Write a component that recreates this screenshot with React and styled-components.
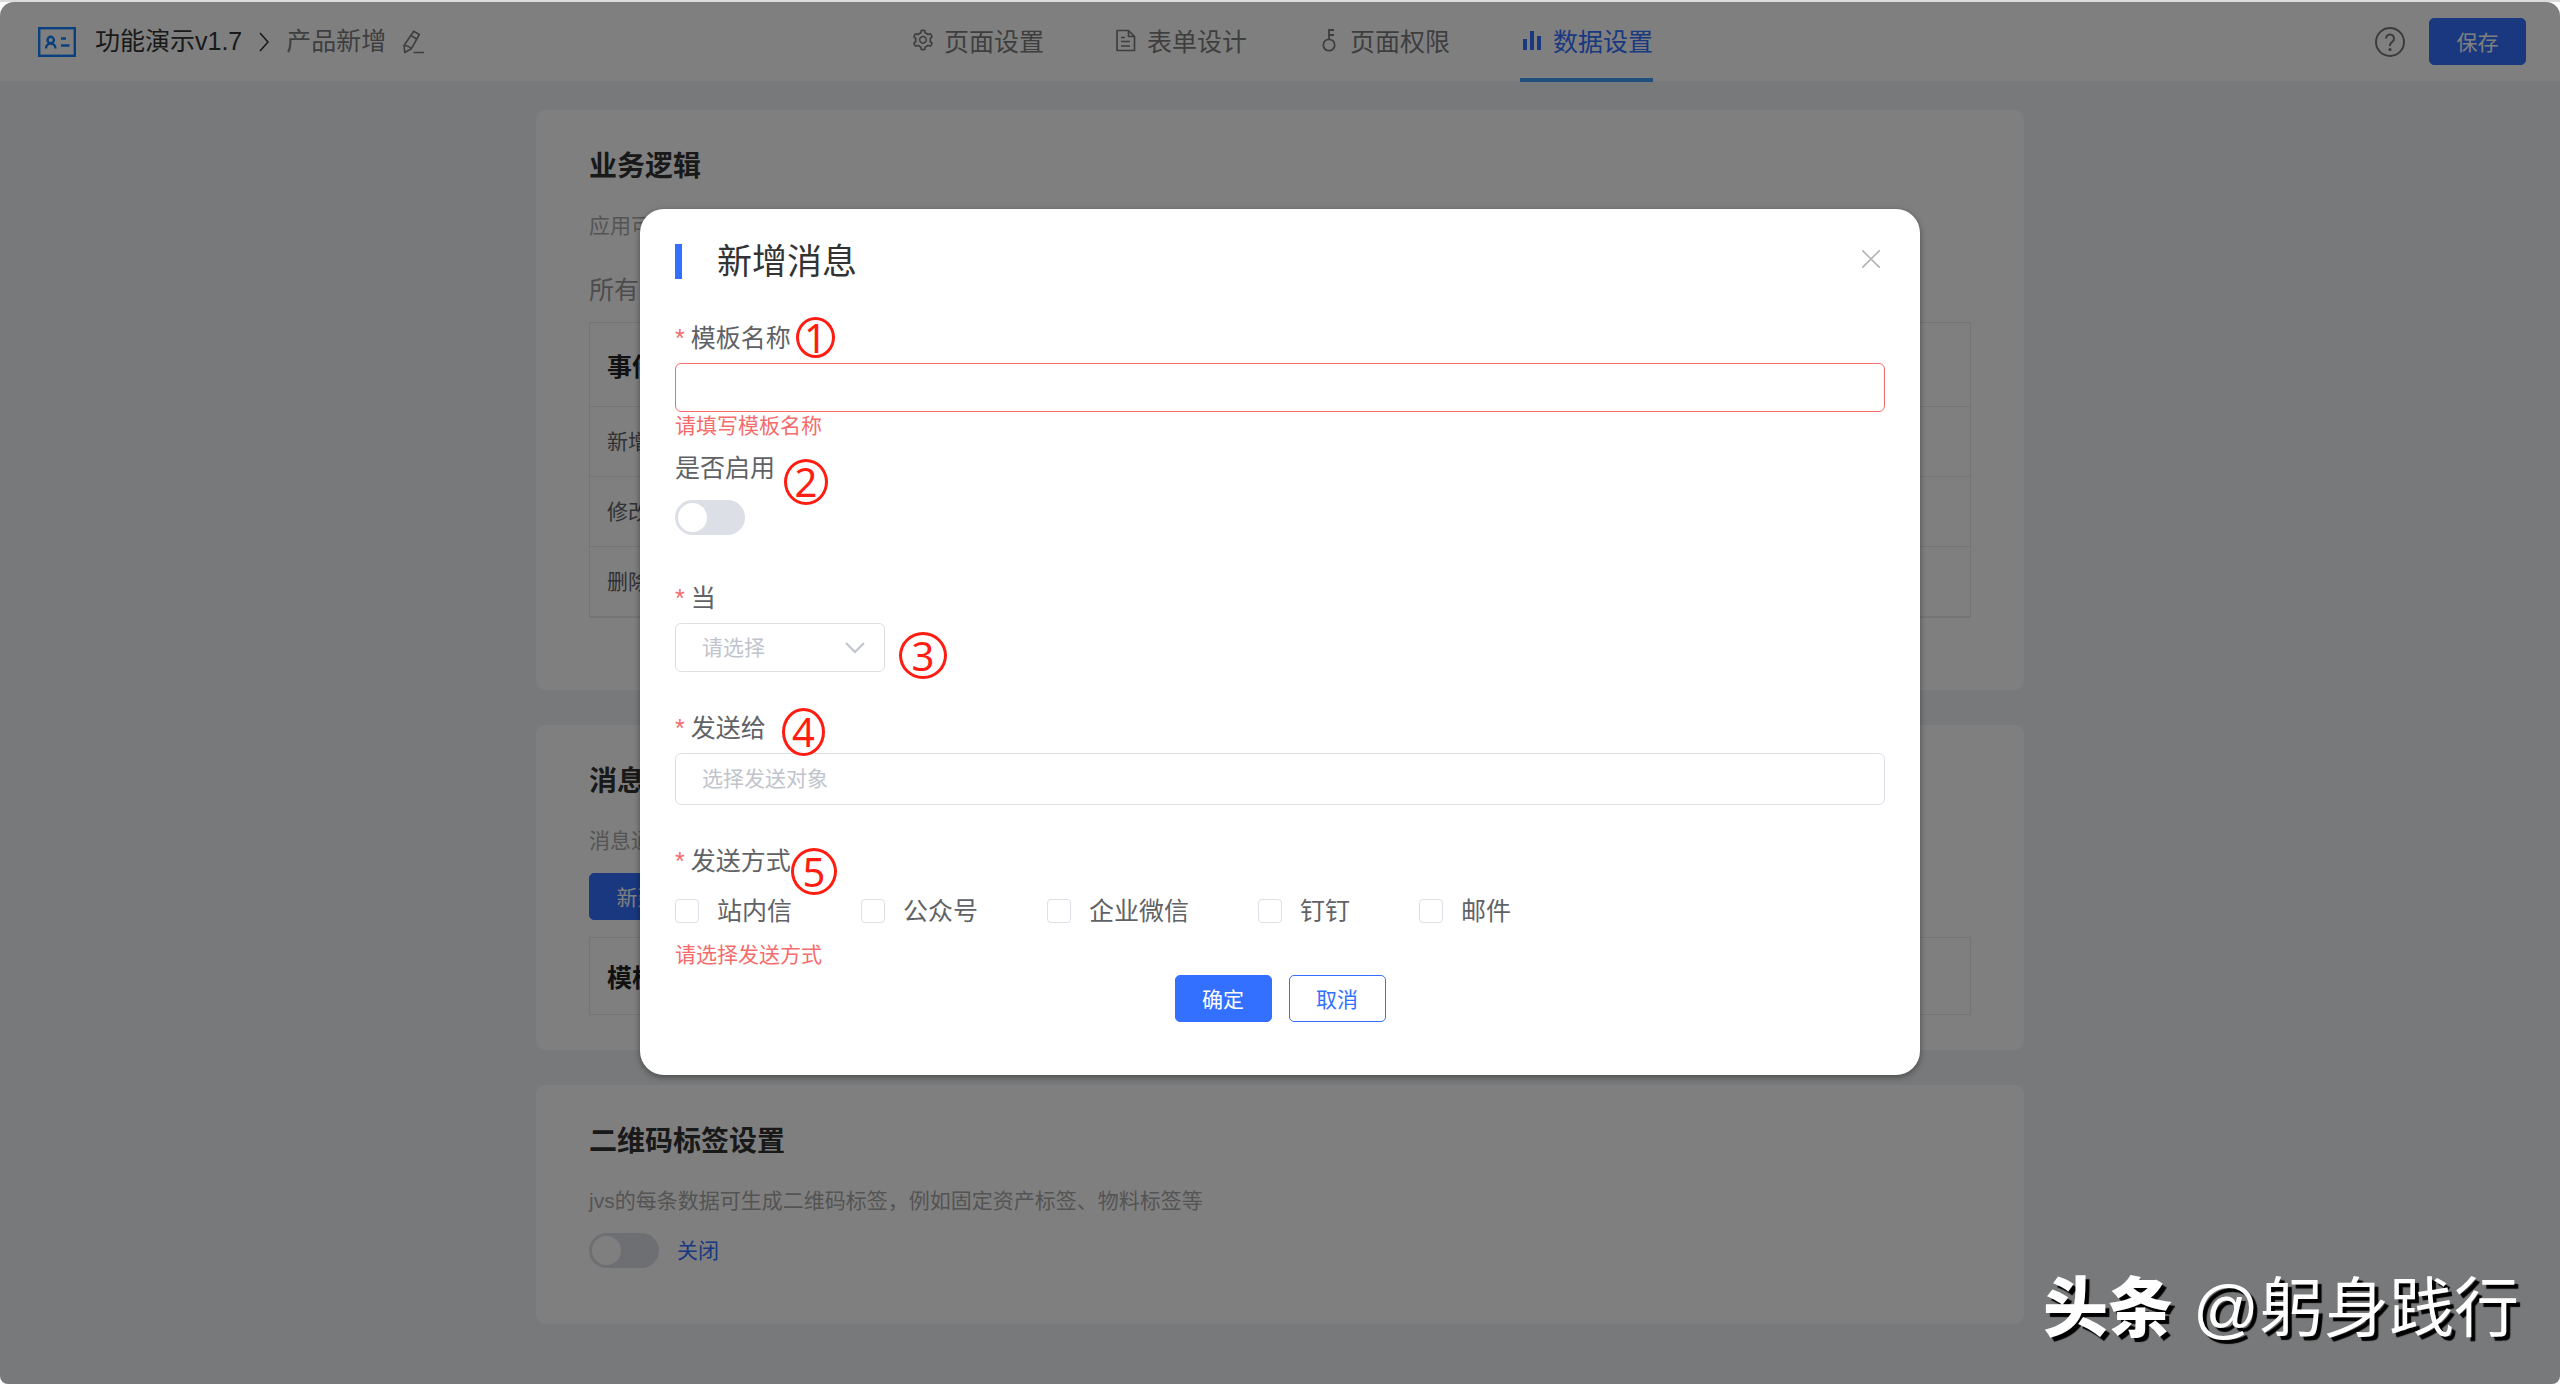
import React, { useState } from "react"
import styled, { createGlobalStyle } from "styled-components"
import { AiOutlineSetting } from "react-icons/ai"

const tabs = [
  { id: "page", text: "页面设置", icon: <AiOutlineSetting size={26} /> },
  { id: "form", text: "表单设计", icon: <FormIcon /> },
  { id: "auth", text: "页面权限", icon: <KeyIcon /> },
  { id: "data", text: "数据设置", icon: <ChartIcon /> },
]
const events = ["新增", "修改", "删除"]
const channels = ["站内信", "公众号", "企业微信", "钉钉", "邮件"]

export default function App() {
  const [tab, setTab] = useState("data")
  return (
    <Page>
      <GlobalStyle />
      <Frame>
        <Header>
          <Crumbs>
            <LogoIcon />
            <AppName>功能演示v1.7</AppName>
            <svg width="10" height="20" viewBox="0 0 10 20" fill="none" stroke="#333" strokeWidth="1.6">
              <path d="M1 1l8 9-8 9" />
            </svg>
            <PageName>产品新增</PageName>
            <IconButton aria-label="编辑名称">
              <PencilIcon />
            </IconButton>
          </Crumbs>
          <Tabs>
            {tabs.map(item => (
              <Tab key={item.id} $active={item.id === tab} onClick={() => setTab(item.id)}>
                {item.icon}
                {item.text}
              </Tab>
            ))}
          </Tabs>
          <Actions>
            <IconButton aria-label="帮助">
              <HelpIcon />
            </IconButton>
            <Button $primary>保存</Button>
          </Actions>
        </Header>
        <Main>
          <Card $bottom={72}>
            <CardTitle>业务逻辑</CardTitle>
            <Description>应用可配置业务逻辑</Description>
            <Summary>所有的事件</Summary>
            <Table>
              <thead>
                <tr>
                  <th>事件</th>
                </tr>
              </thead>
              <tbody>
                {events.map(name => (
                  <tr key={name}>
                    <td>{name}</td>
                  </tr>
                ))}
              </tbody>
            </Table>
          </Card>
          <Card $bottom={35}>
            <CardTitle>消息通知</CardTitle>
            <Description>消息通知设置</Description>
            <CardRow>
              <Button $primary>新建</Button>
            </CardRow>
            <Table $compact>
              <thead>
                <tr>
                  <th>模板名称</th>
                </tr>
              </thead>
            </Table>
          </Card>
          <Card $bottom={56}>
            <CardTitle>二维码标签设置</CardTitle>
            <Description>jvs的每条数据可生成二维码标签，例如固定资产标签、物料标签等</Description>
            <CardRow>
              <Switch type="checkbox" role="switch" id="qrcode" />
              <SwitchText htmlFor="qrcode">关闭</SwitchText>
            </CardRow>
          </Card>
        </Main>
        <Overlay>
          <MessageDialog />
        </Overlay>
        <Watermark>
          <b>头条</b>
          <span>@躬身践行</span>
        </Watermark>
      </Frame>
    </Page>
  )
}

function MessageDialog() {
  return (
    <Dialog role="dialog" aria-labelledby="dialog-title">
      <DialogHeader>
        <DialogTitle id="dialog-title">新增消息</DialogTitle>
        <IconButton aria-label="关闭">
          <svg width="18" height="18" viewBox="0 0 18 18" stroke="#b4b4b4" strokeWidth="1.6">
            <path d="M0 0l18 18M18 0L0 18" />
          </svg>
        </IconButton>
      </DialogHeader>
      <Item>
        <Label htmlFor="name" $required>
          模板名称
        </Label>
        <Input id="name" $error />
        <Message>请填写模板名称</Message>
        <Mark $x={121} $y={-4} $w={39} $h={41}>1</Mark>
      </Item>
      <Item>
        <Label htmlFor="enabled">是否启用</Label>
        <Control>
          <Switch type="checkbox" role="switch" id="enabled" />
        </Control>
        <Message />
        <Mark $x={109} $y={8} $w={44} $h={46}>2</Mark>
      </Item>
      <Item>
        <Label htmlFor="when" $required>
          当
        </Label>
        <SelectBox>
          <select id="when" defaultValue="">
            <option value="">请选择</option>
            {events.map(name => (
              <option key={name}>{name}</option>
            ))}
          </select>
          <svg width="20" height="12" viewBox="0 0 20 12" fill="none" stroke="#c0c4cc" strokeWidth="2">
            <path d="M1 1l9 9 9-9" />
          </svg>
        </SelectBox>
        <Message />
        <Mark $x={224} $y={51} $w={48} $h={47}>3</Mark>
      </Item>
      <Item>
        <Label htmlFor="target" $required>
          发送给
        </Label>
        <Input id="target" $tall placeholder="选择发送对象" />
        <Message />
        <Mark $x={107} $y={-3} $w={43} $h={48}>4</Mark>
      </Item>
      <Item role="group" aria-labelledby="channel-label">
        <Label as="span" id="channel-label" $required>
          发送方式
        </Label>
        <Control>
          {channels.map(name => (
            <Check key={name}>
              <input type="checkbox" />
              {name}
            </Check>
          ))}
        </Control>
        <Message $center>请选择发送方式</Message>
        <Mark $x={116} $y={4} $w={46} $h={47}>5</Mark>
      </Item>
      <DialogFooter>
        <Button $primary>确定</Button>
        <Button>取消</Button>
      </DialogFooter>
    </Dialog>
  )
}

function LogoIcon() {
  return (
    <svg width="38" height="30" viewBox="0 0 38 30" fill="none" stroke="#1480ff" strokeWidth="2.4">
      <rect x="1.2" y="1.2" width="35.6" height="27.6" />
      <circle cx="12.7" cy="13" r="3.2" />
      <path d="M8 21.5c0-3 2-5 4.700-5s4.700 2 4.700 5" />
      <path d="M23 11.5h5M23 18.5h8.5" />
    </svg>
  )
}

function PencilIcon() {
  return (
    <svg width="22" height="24" viewBox="0 0 22 24" fill="none" stroke="#7d7d7d" strokeWidth="1.6" strokeLinejoin="round">
      <path d="M10.7 1.2l5.6 3.3-8 14.3-6.500 3.700-.8-7z" />
      <path d="M7.8 5.5l5.6 3.3M1 15.500c3 0 5.500 1 7.300 3.300M10.500 22.500h10.500" />
    </svg>
  )
}

function FormIcon() {
  return (
    <svg width="24" height="24" viewBox="0 0 24 24" fill="none" stroke="currentColor" strokeWidth="1.7" strokeLinejoin="round">
      <path d="M3 2.500h11.500l6 6v14H3zM14.500 2.500v6h6" />
      <path d="M7 9.500h4M7 13.500h9M7 18h9" />
    </svg>
  )
}

function KeyIcon() {
  return (
    <svg width="24" height="24" viewBox="0 0 24 24" fill="none" stroke="currentColor" strokeWidth="1.8">
      <circle cx="12" cy="17" r="5.700" />
      <path d="M12 11.500V2h5M12 7h5" />
    </svg>
  )
}

function ChartIcon() {
  return (
    <svg width="24" height="24" viewBox="0 0 24 24" fill="currentColor">
      <path d="M3 11h4v11H3zM10 3h4v19h-4zM17 8h4v14h-4z" />
    </svg>
  )
}

function HelpIcon() {
  return (
    <svg width="30" height="30" viewBox="0 0 30 30" fill="none" stroke="#777" strokeWidth="2">
      <circle cx="15" cy="15" r="14" />
      <path d="M11 11.500a4 4 0 1 1 6.200 3.300c-1.500 1-2.200 1.800-2.200 3.200v1" />
      <circle cx="15" cy="22.5" r="1.6" fill="#777" stroke="none" />
    </svg>
  )
}

const GlobalStyle = createGlobalStyle`
  * {
    box-sizing: border-box;
  }
  body {
    margin: 0;
    background: #fff;
    color: #333;
    font-family: "Liberation Sans", "Noto Sans CJK SC", sans-serif;
    font-size: 21px;
  }
  button, input, select {
    font-family: inherit;
    font-size: inherit;
    margin: 0;
  }
`
const Page = styled.div`
  display: flex;
  min-height: 100vh;
  border-top: 2px solid #dcdcdc;
  border-bottom: 1px solid #c4c4c4;
`
const Frame = styled.div`
  position: relative;
  flex: 1;
  background: #f0f2f5;
  border-radius: 14px 14px 8px 8px;
  overflow: hidden;
`
const Header = styled.header`
  display: grid;
  grid-template-columns: 1fr auto 1fr;
  align-items: center;
  height: 79px;
  padding: 0 34px 0 38px;
  background: #fff;
`
const Crumbs = styled.div`
  display: flex;
  align-items: center;
  gap: 17px;
`
const AppName = styled.span`
  padding: 0 0 2px 2px;
  font-size: 25px;
  line-height: 34px;
`
const PageName = styled.span`
  padding-bottom: 2px;
  font-size: 25px;
  line-height: 34px;
  color: #7d7d7d;
`
const IconButton = styled.button`
  display: flex;
  padding: 0;
  border: 0;
  background: none;
  cursor: pointer;
`
const Tabs = styled.nav`
  display: flex;
  gap: 70px;
  height: 79px;
`
const Tab = styled.button`
  position: relative;
  display: flex;
  align-items: center;
  gap: 9px;
  padding: 0 0 3px;
  border: 0;
  background: none;
  font-size: 25px;
  color: ${props => (props.$active ? "#3370ff" : "#7d7d7d")};
  cursor: pointer;
  svg {
    width: 24px;
    overflow: visible;
  }
  &::after {
    content: "";
    display: ${props => (props.$active ? "block" : "none")};
    position: absolute;
    left: 0;
    right: 0;
    bottom: -1px;
    height: 4px;
    background: #409eff;
  }
`
const Actions = styled.div`
  display: flex;
  justify-content: flex-end;
  align-items: center;
  gap: 24px;
`
const Button = styled.button`
  min-width: 97px;
  height: 47px;
  padding: 0 26px 1px;
  border: 1px solid #3370ff;
  border-radius: 5px;
  background: ${props => (props.$primary ? "#3370ff" : "#fff")};
  color: ${props => (props.$primary ? "#fff" : "#3370ff")};
  cursor: pointer;
`
const Main = styled.main`
  display: flex;
  flex-direction: column;
  gap: 35px;
  max-width: 1488px;
  margin: 0 auto;
  padding: 29px 0 60px;
`
const Card = styled.section`
  padding: 36px 53px ${props => props.$bottom}px;
  border-radius: 10px;
  background: #fff;
`
const CardTitle = styled.h2`
  margin: 0 0 24px;
  font-size: 28px;
  line-height: 42px;
`
const Description = styled.p`
  margin: 0;
  line-height: 28px;
  color: #a9a9a9;
`
const Summary = styled.p`
  margin: 32px 0 14px;
  font-size: 25px;
  line-height: 36px;
  color: #999;
`
const CardRow = styled.div`
  display: flex;
  align-items: center;
  gap: 18px;
  margin: 18px 0 0;
`
const Table = styled.table`
  width: 100%;
  margin-top: ${props => (props.$compact ? 17 : 0)}px;
  border-collapse: collapse;
  border: 1px solid #e8eaee;
  border-bottom-width: ${props => (props.$compact ? 1 : 2)}px;
  text-align: left;
  th,
  td {
    height: 70px;
    padding: 0 17px 3px;
    border-bottom: 1px solid #e8eaee;
    color: #606266;
  }
  th {
    height: ${props => (props.$compact ? 77 : 84)}px;
    padding-bottom: 0;
    font-size: 25px;
    color: #222;
  }
`
const Switch = styled.input`
  appearance: none;
  display: flex;
  width: 70px;
  height: 35px;
  padding: 3px;
  border-radius: 18px;
  background: #dcdfe6;
  cursor: pointer;
  &::before {
    content: "";
    width: 29px;
    height: 29px;
    border-radius: 50%;
    background: #fff;
  }
  &:checked {
    justify-content: flex-end;
    background: #3370ff;
  }
`
const SwitchText = styled.label`
  padding-bottom: 3px;
  color: #3370ff;
`
const Overlay = styled.div`
  position: absolute;
  inset: 0;
  padding-top: 207px;
  background: rgba(0, 0, 0, 0.5);
`
const Dialog = styled.div`
  width: 50%;
  margin: 0 auto;
  padding: 35px 35px 53px;
  border-radius: 24px;
  background: #fff;
  box-shadow: 0 2px 6px rgba(0, 0, 0, 0.4);
`
const DialogHeader = styled.div`
  display: flex;
  justify-content: space-between;
  align-items: flex-start;
  height: 35px;
  margin-bottom: 42px;
  padding-right: 5px;
  ${IconButton} {
    padding-top: 6px;
  }
`
const DialogTitle = styled.h1`
  margin: 0;
  padding-left: 35px;
  border-left: 7px solid #3370ff;
  font-size: 35px;
  font-weight: 400;
  line-height: 35px;
`
const Item = styled.div`
  position: relative;
`
const Label = styled.label`
  display: flex;
  width: fit-content;
  margin-bottom: 8px;
  font-size: 25px;
  line-height: 34px;
  color: #606266;
  &::before {
    content: "*";
    display: ${props => (props.$required ? "block" : "none")};
    margin-right: 6px;
    color: #f56c6c;
  }
`
const Input = styled.input`
  display: block;
  width: 100%;
  height: ${props => (props.$tall ? 52 : 49)}px;
  padding: 0 26px;
  border: 1px solid ${props => (props.$error ? "#f56c6c" : "#dcdfe6")};
  border-radius: 6px;
  background: #fff;
  &::placeholder {
    color: #c0c4cc;
  }
`
const SelectBox = styled.div`
  position: relative;
  width: 210px;
  select {
    appearance: none;
    display: block;
    width: 100%;
    height: 49px;
    padding: 0 26px;
    border: 1px solid #dcdfe6;
    border-radius: 6px;
    background: #fff;
    color: #c0c4cc;
  }
  svg {
    position: absolute;
    top: 19px;
    right: 20px;
    pointer-events: none;
  }
`
const Control = styled.div`
  display: flex;
  align-items: center;
  gap: 69px;
  height: 49px;
`
const Check = styled.label`
  display: flex;
  align-items: center;
  gap: 18px;
  font-size: 25px;
  line-height: 34px;
  color: #606266;
  input {
    appearance: none;
    width: 24px;
    height: 24px;
    border: 1px solid #dcdfe6;
    border-radius: 4px;
    background: #fff;
  }
  input:checked {
    background: #3370ff;
  }
`
const Message = styled.div`
  display: flex;
  align-items: ${props => (props.$center ? "center" : "flex-start")};
  height: 39px;
  line-height: 28px;
  color: #f56c6c;
`
// numbered callout drawn over a form item
const Mark = styled.span`
  position: absolute;
  left: ${props => props.$x}px;
  top: ${props => props.$y}px;
  display: flex;
  justify-content: center;
  align-items: center;
  width: ${props => props.$w}px;
  height: ${props => props.$h}px;
  border: 3px solid #ff1d12;
  border-radius: 50%;
  color: #ff1d12;
  font-family: "Noto Sans", "Open Sans", sans-serif;
  font-size: 40px;
  line-height: 40px;
`
const DialogFooter = styled.div`
  display: flex;
  justify-content: center;
  gap: 17px;
  padding-top: 1px;
`
const Watermark = styled.div`
  position: absolute;
  right: 41px;
  bottom: 27px;
  display: flex;
  gap: 20px;
  color: #fff;
  font-family: "Liberation Sans", "Noto Sans CJK SC", sans-serif;
  font-size: 65px;
  line-height: 96px;
  text-shadow: 4px 4px 1px #000;
  b {
    font-weight: 900;
  }
`
